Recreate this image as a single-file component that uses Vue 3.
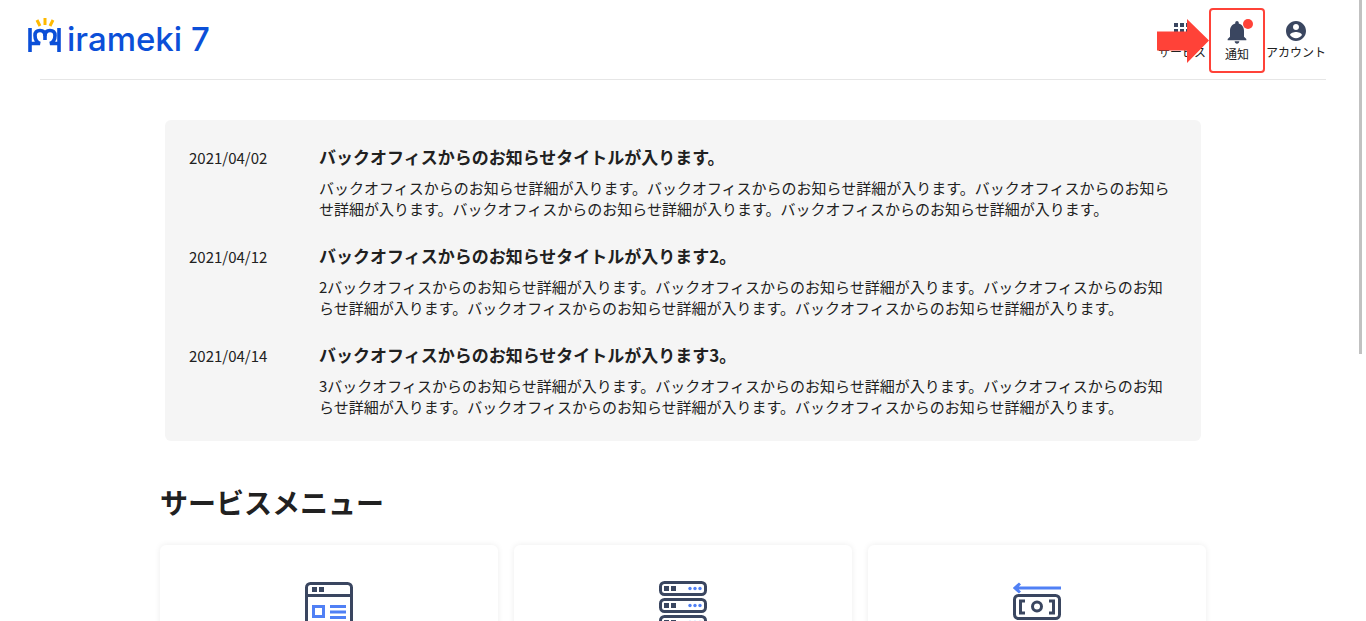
<template>
  <div class="page">
    <!-- ヘッダー -->
    <header class="header">
      <div class="logo">
        <svg class="logo-mark" width="38" height="38" viewBox="0 0 38 38" fill="none">
          <g stroke="#ffb900" stroke-width="3">
            <path d="M11 4l3 6" />
            <path d="M19 2v7" />
            <path d="M27 4l-3 6" />
          </g>
          <g stroke="#0b4fd8" stroke-width="3.600">
            <path d="M4 12v24" />
            <path d="M33 12v24" />
            <path d="M4 27.500h10c-4-1.500-5-5.500-5-8 0-3.500 2-5 5-5s5 2 5 5.500v4" />
            <path d="M33 27.500h-9c4-1.500 5-5.500 5-8 0-3.500-2-5-5-5s-5 2-5 5.500" />
          </g>
        </svg>
        <span class="logo-text">irameki 7</span>
      </div>

      <nav class="nav">
        <div class="nav-item service">
          <svg width="24" height="24" viewBox="0 0 24 24" fill="#3a4660">
            <rect v-for="cell in gridCells" :key="cell.key" :x="cell.x" :y="cell.y" width="4" height="4" />
          </svg>
          <span>サービス</span>
        </div>
        <div class="nav-item notice">
          <div class="bell-wrap">
            <svg width="28" height="28" viewBox="0 0 24 24" fill="#3a4660">
              <path d="M12 22c1.100 0 2-.9 2-2h-4c0 1.100.9 2 2 2zm6-6v-5c0-3.100-1.600-5.600-4.500-6.300V4c0-.8-.7-1.500-1.500-1.500s-1.500.7-1.500 1.500v.7C7.600 5.400 6 7.900 6 11v5l-2 2v1h16v-1l-2-2z" />
            </svg>
            <i class="badge"></i>
          </div>
          <span>通知</span>
        </div>
        <div class="nav-item">
          <svg width="24" height="24" viewBox="0 0 24 24" fill="#3a4660">
            <path d="M12 2C6.500 2 2 6.500 2 12s4.500 10 10 10 10-4.500 10-10S17.500 2 12 2zm0 3c1.700 0 3 1.300 3 3s-1.300 3-3 3-3-1.300-3-3 1.300-3 3-3zm0 14.200c-2.500 0-4.700-1.300-6-3.200 0-2 4-3.100 6-3.100s6 1.100 6 3.100c-1.300 1.900-3.500 3.200-6 3.200z" />
          </svg>
          <span>アカウント</span>
        </div>
        <!-- 注釈の矢印 -->
        <svg class="arrow" width="52" height="44" viewBox="0 0 52 44">
          <path d="M0 12.500h30V0l22 21.500L30 44V31.500H0z" fill="#ff4238" />
        </svg>
      </nav>
    </header>

    <main class="main">
      <!-- お知らせ -->
      <section class="news">
        <div v-for="item in newsList" :key="item.date" class="news-row">
          <div class="news-date">{{ item.date }}</div>
          <div class="news-body">
            <h3 class="news-title">{{ item.title }}</h3>
            <p class="news-text">{{ item.text }}</p>
          </div>
        </div>
      </section>

      <h2 class="menu-title">サービスメニュー</h2>

      <!-- サービスメニュー -->
      <div class="cards">
        <div class="card">
          <svg width="48" height="56" viewBox="0 0 48 56" fill="none">
            <rect x="1.500" y="1.500" width="45" height="60" rx="4" stroke="#3a4660" stroke-width="3" />
            <path d="M1.500 13.500h45" stroke="#3a4660" stroke-width="3" />
            <rect x="7" y="5" width="5" height="5" fill="#3a4660" />
            <rect x="14" y="5" width="5" height="5" fill="#3a4660" />
            <rect x="8.500" y="24.500" width="10" height="10" stroke="#5080f5" stroke-width="3" />
            <path d="M25 24.500h16M25 30h16M25 35.500h16" stroke="#5080f5" stroke-width="2.800" />
          </svg>
        </div>
        <div class="card">
          <svg class="overflow" width="48" height="56" viewBox="0 0 48 56" fill="none">
            <g v-for="y in serverRows" :key="y">
              <rect x="1.500" :y="y + 1.500" width="45" height="12" rx="4" stroke="#3a4660" stroke-width="3" />
              <rect x="5" :y="y + 5" width="5" height="5" fill="#3a4660" />
              <rect x="12" :y="y + 5" width="5" height="5" fill="#3a4660" />
              <circle cx="31" :cy="y + 7.500" r="1.700" fill="#5080f5" />
              <circle cx="36" :cy="y + 7.500" r="1.700" fill="#5080f5" />
              <circle cx="41" :cy="y + 7.500" r="1.700" fill="#5080f5" />
            </g>
          </svg>
        </div>
        <div class="card">
          <svg width="48" height="56" viewBox="0 0 48 56" fill="none">
            <path d="M48 6H2M7 1.500L2 6l5 4.500" stroke="#5080f5" stroke-width="3" />
            <rect x="1.500" y="13.500" width="45" height="23" rx="4" stroke="#3a4660" stroke-width="3" />
            <path d="M12 19H7.500v12H12M36 19h4.500v12H36" stroke="#3a4660" stroke-width="3" />
            <circle cx="24" cy="24.500" r="4.500" stroke="#3a4660" stroke-width="3" />
          </svg>
        </div>
      </div>
    </main>

    <div class="scrollbar"></div>
  </div>
</template>

<script setup>
const base = 'バックオフィスからのお知らせ詳細が入ります。'

const newsList = [
  {
    date: '2021/04/02',
    title: 'バックオフィスからのお知らせタイトルが入ります。',
    text: base.repeat(5),
  },
  {
    date: '2021/04/12',
    title: 'バックオフィスからのお知らせタイトルが入ります2。',
    text: '2' + base.repeat(5),
  },
  {
    date: '2021/04/14',
    title: 'バックオフィスからのお知らせタイトルが入ります3。',
    text: '3' + base.repeat(5),
  },
]

const serverRows = [-1, 16, 33]

const gridCells = []
for (let r = 0; r < 3; r++) {
  for (let c = 0; c < 3; c++) {
    gridCells.push({ key: r + '-' + c, x: 4 + c * 6, y: 4 + r * 6 })
  }
}
</script>

<style>
html,
body {
  margin: 0;
  overflow: hidden;
  background: #fff;
}
</style>

<style scoped>
.page {
  position: relative;
  height: 621px;
  overflow: hidden;
  color: #212121;
  font-family: 'Noto Sans CJK JP', 'Noto Sans', sans-serif;
}

.header {
  display: flex;
  justify-content: space-between;
  align-items: flex-start;
  height: 79px;
  margin: 0 40px;
  border-bottom: 1px solid #e6e6e6;
}

.logo {
  display: flex;
  align-items: flex-start;
  margin: 16px 0 0 -14px;
  height: 38px;
}

.logo-text {
  margin: 4px 0 0 3px;
  font-family: Inter, sans-serif;
  font-size: 33px;
  font-weight: 500;
  line-height: 38px;
  color: #0b4fd8;
}

.nav {
  position: relative;
  display: flex;
  align-items: flex-start;
  margin-top: 8px;
}

.nav-item {
  display: flex;
  flex-direction: column;
  align-items: center;
  padding-top: 11px;
  font-size: 12px;
  line-height: 16px;
  box-sizing: border-box;
  height: 65px;
}

.nav-item span {
  white-space: nowrap;
}

.service {
  margin-right: 3px;
}

.notice {
  width: 56px;
  margin-right: 1px;
  border: 2px solid #ff4238;
  border-radius: 4px;
  padding-top: 8px;
}

.bell-wrap {
  position: relative;
  height: 28px;
  margin-bottom: 0;
}

.bell-wrap svg {
  display: block;
}

.nav-item > svg {
  margin-bottom: 1px;
}

.badge {
  position: absolute;
  top: 1px;
  right: -2px;
  width: 10px;
  height: 10px;
  border-radius: 50%;
  background: #ff4238;
}

.arrow {
  position: absolute;
  left: -1px;
  top: 11px;
}

.main {
  padding: 40px 160px 0;
}

.news {
  box-sizing: border-box;
  margin: 0 5px;
  padding: 24px;
  height: 321px;
  background: #f5f5f5;
  border-radius: 6px;
}

.news-row {
  display: flex;
  margin-bottom: 24px;
}

.news-date {
  flex: 0 0 130px;
  font-size: 15px;
  line-height: 28px;
}

.news-title {
  margin: -1px 0 6px;
  font-size: 17px;
  font-weight: 700;
  line-height: 28px;
}

.news-text {
  margin: 0;
  font-size: 15px;
  line-height: 21px;
}

.menu-title {
  margin: 39px 0 21px;
  font-size: 28px;
  font-weight: 700;
  line-height: 44px;
}

.cards {
  display: grid;
  grid-template-columns: repeat(3, 338px);
  gap: 16px;
}

.card {
  display: flex;
  justify-content: center;
  height: 200px;
  padding-top: 37px;
  border-radius: 6px;
  box-shadow: 0 0 6px rgba(0, 0, 0, 0.08);
}

.overflow {
  overflow: visible;
}

.scrollbar {
  position: absolute;
  top: 0;
  right: 4px;
  width: 3px;
  height: 354px;
  background: #c1c1c1;
}
</style>
